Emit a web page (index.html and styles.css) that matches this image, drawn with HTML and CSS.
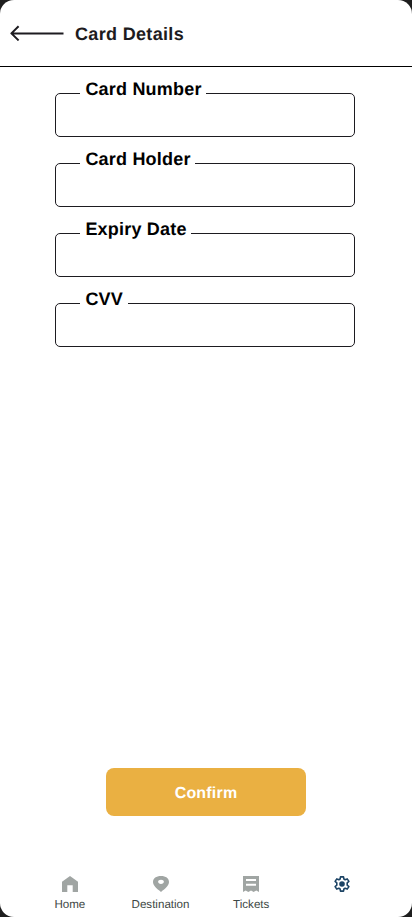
FILE: index.html
```html
<!DOCTYPE html>
<html lang="en">
<head>
<meta charset="utf-8">
<title>Card Details</title>
<link rel="stylesheet" href="styles.css">
</head>
<body>
<div class="screen">
  <header class="header">
    <svg class="back" width="54" height="16" viewBox="0 0 54 16" fill="none" stroke="#1d1b20" stroke-width="2" stroke-linejoin="round"><path d="M53.500 8.400H1.600M8.600 1.200L1.400 8.400l7.200 7"/></svg>
    <h1 class="title">Card Details</h1>
  </header>
  <main class="form">
    <div class="field"><span class="label">Card Number</span></div>
    <div class="field"><span class="label">Card Holder</span></div>
    <div class="field"><span class="label">Expiry Date</span></div>
    <div class="field"><span class="label">CVV</span></div>
  </main>
  <button class="confirm">Confirm</button>
  <nav class="nav">
    <a class="item"><svg width="16" height="16" viewBox="0 0 16 16" fill="#a0a5a3"><path d="M0 16V5.700L8 0l8 5.700V16h-5.300V9.300H5.300V16z"/></svg><span>Home</span></a>
    <a class="item"><svg width="16" height="16" viewBox="0 0 16 16" fill="#a0a5a3"><path fill-rule="evenodd" d="M8 0c4.800 0 8 2.300 8 6.100 0 3.700-3.600 6.400-8 9.900-4.400-3.500-8-6.200-8-9.900C0 2.300 3.200 0 8 0zm0 3.700c-1.700 0-2.900.9-2.900 2.100S6.300 7.900 8 7.900s2.900-.9 2.900-2.100S9.700 3.700 8 3.700z"/></svg><span>Destination</span></a>
    <a class="item"><svg width="16" height="16" viewBox="0 0 16 16" fill="#a0a5a3"><path fill-rule="evenodd" d="M0 0h16v16l-2.700-1.600-2.600 1.600L8 14.400 5.300 16l-2.600-1.600L0 16zM3 3v2.100h10V3zM3 7.700v2.100h10V7.700z"/></svg><span>Tickets</span></a>
    <a class="item"><svg width="16" height="16" viewBox="0 0 16 16"><path fill="none" stroke="#1c4364" stroke-width="1.600" stroke-linejoin="round" d="M6.500.9h3l.4 2.100 1.200.7 2.100-.8 1.700 2.500-1.700 1.400v2.400l1.700 1.400-1.700 2.500-2.100-.8-1.200.7-.4 2.100h-3l-.4-2.100-1.200-.7-2.100.8-1.700-2.500 1.700-1.400V6.800L1.100 5.400l1.700-2.500 2.100.8L6.100 3z"/><circle cx="8" cy="8" r="2.800" fill="#1c4364"/></svg></a>
  </nav>
</div>
</body>
</html>
```
FILE: styles.css
```css
* { box-sizing: border-box; }
body {
  margin: 0;
  background: #1e1e1e;
  font-family: "Liberation Sans", Arial, sans-serif;
  text-rendering: geometricPrecision;
}
.screen {
  display: flex;
  flex-direction: column;
  width: 412px;
  height: 917px;
  background: #fff;
  border-radius: 14px;
  overflow: hidden;
}
.header {
  display: flex;
  align-items: center;
  gap: 11px;
  height: 67px;
  padding-left: 10px;
  border-bottom: 1px solid #000;
}
.title {
  margin: 0;
  padding-top: 2px;
  font-size: 18px;
  line-height: 22px;
  letter-spacing: 0.33px;
  color: #1d1b20;
}
.form {
  display: flex;
  flex-direction: column;
  gap: 26px;
  width: 300px;
  margin: 26px 0 0 55px;
}
.field {
  height: 44px;
  padding-left: 24.400px;
  border: 1px solid #1d1b20;
  border-radius: 5px;
}
.label {
  display: block;
  width: max-content;
  margin-top: -16px;
  padding: 0 4.800px 0 5px;
  background: #fff;
  font-size: 18px;
  font-weight: 700;
  line-height: 22px;
  letter-spacing: 0.2px;
  color: #000;
}
.confirm {
  width: 200px;
  height: 48px;
  margin: auto auto 0;
  padding: 3px 0 0;
  border: 0;
  border-radius: 8px;
  background: #eab042;
  color: #fff;
  font: 700 16px/20px "Liberation Sans", Arial, sans-serif;
  text-rendering: geometricPrecision;
  letter-spacing: 0.2px;
}
.nav {
  display: grid;
  grid-template-columns: repeat(4, 90.700px);
  height: 41px;
  margin: 60px 0 0 24.500px;
}
.item {
  display: flex;
  flex-direction: column;
  align-items: center;
  gap: 6px;
  color: #3d4744;
  font-size: 11.600px;
  line-height: 13px;
}
```
